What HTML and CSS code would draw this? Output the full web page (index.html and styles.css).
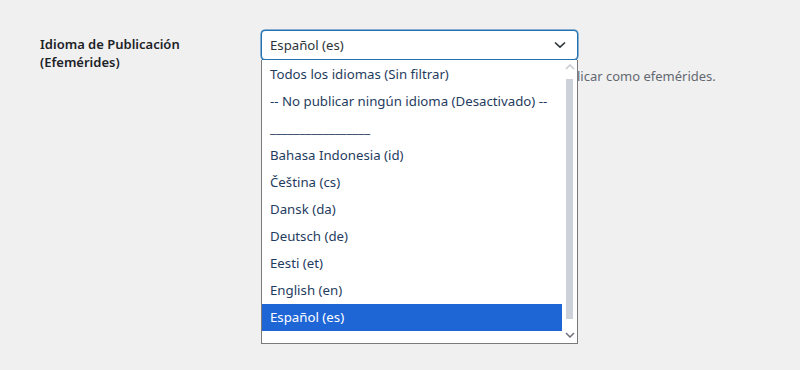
FILE: index.html
```html
<!DOCTYPE html>
<html lang="es">
<head>
<meta charset="utf-8">
<title>Idioma de Publicación</title>
<link rel="stylesheet" href="styles.css">
</head>
<body>
<div class="page">
  <div class="row">
    <div class="label">Idioma de Publicación<br>(Efemérides)</div>
    <div class="field">
      <div class="select-wrap">
        <div class="select">
          <span>Español (es)</span>
          <svg class="chevron" width="12" height="8" viewBox="0 0 12 8"><path d="M1 1.5 L6 6.2 L11 1.5" fill="none" stroke="#2c3338" stroke-width="1.6"/></svg>
        </div>
        <div class="dropdown">
          <ul class="options">
            <li>Todos los idiomas (Sin filtrar)</li>
            <li>-- No publicar ningún idioma (Desactivado) --</li>
            <li>_________________</li>
            <li>Bahasa Indonesia (id)</li>
            <li>Čeština (cs)</li>
            <li>Dansk (da)</li>
            <li>Deutsch (de)</li>
            <li>Eesti (et)</li>
            <li>English (en)</li>
            <li class="selected">Español (es)</li>
            <li></li>
          </ul>
          <div class="scrollbar">
            <svg class="arrow" width="10" height="6" viewBox="0 0 10 6"><path d="M1 5 L5 1 L9 5" fill="none" stroke="#c5c8ce" stroke-width="1.5"/></svg>
            <div class="track"><div class="thumb"></div></div>
            <svg class="arrow" width="10" height="6" viewBox="0 0 10 6"><path d="M1 1 L5 5 L9 1" fill="none" stroke="#6d7078" stroke-width="1.5"/></svg>
          </div>
        </div>
      </div>
      <p class="desc">Selecciona el idioma de las noticias que quieres publicar como efemérides.</p>
    </div>
  </div>
</div>
</body>
</html>
```
FILE: styles.css
```css
html, body {
  margin: 0;
  padding: 0;
  background: #f0f0f1;
}
body {
  font-family: "Noto Sans", "Open Sans", sans-serif;
  font-size: 13px;
  color: #1d2327;
  min-height: 370px;
}
.page {
  padding: 30px 0 0 40px;
  min-height: 370px;
  box-sizing: border-box;
}
.row {
  display: flex;
}
.label {
  width: 221px;
  flex: none;
  font-weight: 600;
  line-height: 18px;
  padding-top: 5px;
  font-size: 13px;
}
.field {
  flex: none;
  width: 480px;
}
.select-wrap {
  position: relative;
  width: 317px;
}
.select {
  box-sizing: border-box;
  height: 30px;
  border: 1px solid #2271b1;
  box-shadow: 0 0 0 0.5px #2271b1;
  border-radius: 4px;
  background: #fff;
  display: flex;
  align-items: center;
  justify-content: space-between;
  padding: 0 11px 0 8px;
  color: #2c3338;
  font-size: 13.2px;
}
.chevron {
  display: block;
}
.dropdown {
  position: absolute;
  top: 30px;
  left: 0;
  box-sizing: border-box;
  width: 317px;
  height: 284px;
  border: 1px solid #7a7a7a;
  border-top: none;
  background: #fff;
  display: flex;
  z-index: 2;
}
.options {
  list-style: none;
  margin: 0;
  padding: 1px 0 0;
  flex: 1;
  overflow: hidden;
  font-size: 13.25px;
}
.options li {
  height: 27px;
  line-height: 27px;
  padding-left: 8px;
  color: #1f3c5e;
  white-space: nowrap;
}
.options li.selected {
  background: #1e66d6;
  color: #fff;
}
.scrollbar {
  width: 15px;
  flex: none;
  display: flex;
  flex-direction: column;
  align-items: center;
  padding: 4px 0 5px;
  box-sizing: border-box;
  gap: 3px;
}
.track {
  flex: 1;
  width: 100%;
  display: flex;
  justify-content: center;
  padding-top: 6px;
  padding-bottom: 8px;
  box-sizing: border-box;
}
.thumb {
  width: 7px;
  height: 240px;
  background: #cdd1da;
}
.desc {
  margin: 6px 0 0;
  line-height: 20px;
  color: #646970;
}
```
